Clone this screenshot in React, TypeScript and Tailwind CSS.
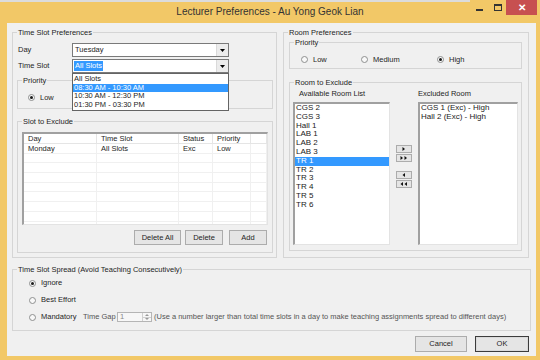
import React from "react";

const Radio = ({ label, checked = false }: { label: string; checked?: boolean }) => (
  <div className="flex h-[9px] items-center gap-[5px]">
    <span className="flex h-[7px] w-[7px] items-center justify-center rounded-full border border-[#8e8f8f] bg-[#f8f8f8]">
      {checked && <span className="h-[3px] w-[3px] rounded-full bg-[#1a1a1a]" />}
    </span>
    <span>{label}</span>
  </div>
);

const Group = ({
  title,
  className,
  children,
}: {
  title: string;
  className: string;
  children: React.ReactNode;
}) => (
  <fieldset className={"border border-[#d5d5d5] " + className}>
    <legend className="ml-[4px] px-[1px] leading-[9px]">{title}</legend>
    {children}
  </fieldset>
);

const Combo = ({ value, selected = false }: { value: string; selected?: boolean }) => (
  <div className="flex h-[14px] w-[157px] items-center border border-[#7a7a7a] bg-white">
    <div className="flex h-full flex-1 items-center pl-[1px]">
      {selected ? (
        <span className="flex h-[10px] items-center bg-[#3399ff] px-[1px] text-white">{value}</span>
      ) : (
        <span className="pl-[1px]">{value}</span>
      )}
    </div>
    <div className="flex h-full w-[12px] items-center justify-center border-l border-[#dadada] bg-[#ececec]">
      <svg width="5" height="3" viewBox="0 0 5 3">
        <path d="M0 0H5L2.5 3Z" fill="#000" />
      </svg>
    </div>
  </div>
);

const Button = ({ label, className }: { label: string; className: string }) => (
  <button className={"flex items-center justify-center border border-[#acacac] bg-[#e5e5e5] " + className}>
    {label}
  </button>
);

const Arrow = ({ dir, count }: { dir: "left" | "right"; count: number }) => (
  <button className="flex h-[8px] w-[16px] items-center justify-center border border-[#acacac] bg-[#e5e5e5]">
    <svg width={count * 4} height="4" viewBox={`0 0 ${count * 4} 4`}>
      {Array.from({ length: count }).map((_, i) =>
        dir === "right" ? (
          <path key={i} d={`M${i * 4 + 0.5} 0L${i * 4 + 3} 2L${i * 4 + 0.5} 4Z`} fill="#111" />
        ) : (
          <path key={i} d={`M${i * 4 + 3} 0L${i * 4 + 0.5} 2L${i * 4 + 3} 4Z`} fill="#111" />
        )
      )}
    </svg>
  </button>
);

const rooms = ["CGS 2", "CGS 3", "Hall 1", "LAB 1", "LAB 2", "LAB 3", "TR 1", "TR 2", "TR 3", "TR 4", "TR 5", "TR 6"];
const excluded = ["CGS 1 (Exc) - High", "Hall 2 (Exc) - High"];
const slots = ["All Slots", "08:30 AM - 10:30 AM", "10:30 AM - 12:30 PM", "01:30 PM - 03:30 PM"];
const cols = ["w-[73px]", "w-[82px]", "w-[34px]", "w-[38px]", "flex-1"];

export default function App() {
  return (
    <div className="flex h-[360px] w-[540px] flex-col overflow-hidden bg-[#f2c867] font-['Liberation_Sans',Arial,sans-serif] text-[7.5px] text-[#1e1e1e]">
      {/* title bar */}
      <div className="relative h-[23px] shrink-0">
        <div className="h-[2px] w-[470px] bg-[#dcdcdc]" />
        <div className="pt-[3px] text-center text-[10px] leading-[14px] text-[#333]">
          Lecturer Preferences - Au Yong Geok Lian
        </div>
        <div className="absolute right-[3px] top-0 flex h-[15px] items-start">
          <div className="flex h-[15px] w-[20px] items-end justify-center pb-[4px]">
            <div className="h-[2px] w-[7px] bg-[#333]" />
          </div>
          <div className="flex h-[15px] w-[17px] items-center justify-center">
            <div className="h-[7px] w-[8px] border border-t-2 border-[#333]" />
          </div>
          <div className="flex h-[15px] w-[31px] items-center justify-center bg-[#c75050] text-[10px] font-bold text-white">
            ✕
          </div>
        </div>
      </div>

      {/* client area */}
      <div className="mb-[4px] ml-[7px] mr-[4px] flex flex-1 flex-col bg-[#f0f0f0] px-[5px] pt-[5px]">
        <div className="flex h-[230px] gap-[6px]">
          {/* Time slot preferences */}
          <Group title="Time Slot Preferences" className="h-[230px] w-[265px]">
            <div className="flex flex-col pl-[5px] pt-[6px]">
              <div className="flex h-[14px] items-center">
                <span className="w-[54px]">Day</span>
                <Combo value="Tuesday" />
              </div>
              <div className="relative mt-[2px] flex h-[14px] items-center">
                <span className="w-[54px]">Time Slot</span>
                <Combo value="All Slots" selected />
                <div className="absolute left-[54px] top-[14px] z-10 w-[157px] border border-[#646464] bg-white py-[1px]">
                  {slots.map((s, i) => (
                    <div
                      key={s}
                      className={
                        i === 1
                          ? "h-[8.5px] bg-[#3399ff] pl-[1px] leading-[8.5px] text-white"
                          : "h-[8.5px] pl-[1px] leading-[8.5px]"
                      }
                    >
                      {s}
                    </div>
                  ))}
                </div>
              </div>
            </div>
            <Group title="Priority" className="ml-[4px] mt-[3px] h-[33px] w-[256px]">
              <div className="pl-[10px] pt-[8px]">
                <Radio label="Low" checked />
              </div>
            </Group>
            <Group title="Slot to Exclude" className="ml-[4px] mt-[8px] h-[136px] w-[256px]">
              <div className="ml-[4px] mt-[6px] flex h-[93px] w-[246px] flex-col overflow-hidden border-b border-l-2 border-r border-t-2 border-b-[#e3e3e3] border-l-[#a0a0a0] border-r-[#e3e3e3] border-t-[#a0a0a0] bg-white">
                <div className="flex h-[10px] shrink-0 border-b border-[#e5e5e5] leading-[9px]">
                  {["Day", "Time Slot", "Status", "Priority", ""].map((h, i) => (
                    <div key={i} className={"border-r border-[#e5e5e5] pl-[4px] " + cols[i]}>
                      {h}
                    </div>
                  ))}
                </div>
                {Array.from({ length: 9 }).map((_, r) => (
                  <div key={r} className="flex h-[9.7px] shrink-0 border-b border-[#f0f0f0] leading-[9px]">
                    {(r === 0 ? ["Monday", "All Slots", "Exc", "Low", ""] : ["", "", "", "", ""]).map((c, i) => (
                      <div key={i} className={"border-r border-[#f0f0f0] pl-[4px] " + cols[i]}>
                        {c}
                      </div>
                    ))}
                  </div>
                ))}
              </div>
              <div className="mt-[5px] flex justify-end pr-[5px]">
                <Button label="Delete All" className="h-[15px] w-[47px]" />
                <Button label="Delete" className="ml-[4px] h-[15px] w-[38px]" />
                <Button label="Add" className="ml-[6px] h-[15px] w-[38px]" />
              </div>
            </Group>
          </Group>

          {/* Room preferences */}
          <Group title="Room Preferences" className="h-[230px] w-[246px]">
            <Group title="Priority" className="ml-[5px] mt-[1px] h-[31px] w-[233px]">
              <div className="flex pl-[11px] pt-[8px]">
                <div className="w-[60px]">
                  <Radio label="Low" />
                </div>
                <div className="w-[76px]">
                  <Radio label="Medium" />
                </div>
                <Radio label="High" checked />
              </div>
            </Group>
            <Group title="Room to Exclude" className="ml-[5px] mt-[9px] h-[173px] w-[233px]">
              <div className="mt-[2px] flex h-[9px] leading-[9px]">
                <span className="w-[128px] pl-[9px]">Available Room List</span>
                <span>Excluded Room</span>
              </div>
              <div className="ml-[3px] mt-[4px] flex h-[143px] gap-[6px]">
                <div className="w-[97px] border-b border-l-2 border-r border-t-2 border-b-[#e3e3e3] border-l-[#a0a0a0] border-r-[#e3e3e3] border-t-[#a0a0a0] bg-white">
                  {rooms.map((r) => (
                    <div
                      key={r}
                      className={
                        r === "TR 1"
                          ? "h-[8.8px] bg-[#3399ff] pl-[1px] text-[8px] leading-[8.8px] text-white"
                          : "h-[8.8px] pl-[1px] text-[8px] leading-[8.8px] text-[#222]"
                      }
                    >
                      {r}
                    </div>
                  ))}
                </div>
                <div className="flex w-[16px] flex-col gap-[1px] pt-[43px]">
                  <Arrow dir="right" count={1} />
                  <Arrow dir="right" count={2} />
                  <div className="h-[7px]" />
                  <Arrow dir="left" count={1} />
                  <Arrow dir="left" count={2} />
                </div>
                <div className="w-[100px] border-b border-l-2 border-r border-t-2 border-b-[#e3e3e3] border-l-[#a0a0a0] border-r-[#e3e3e3] border-t-[#a0a0a0] bg-white">
                  {excluded.map((r) => (
                    <div key={r} className="h-[8.8px] pl-[1px] text-[8px] leading-[8.8px] text-[#222]">
                      {r}
                    </div>
                  ))}
                </div>
              </div>
            </Group>
          </Group>
        </div>

        {/* spread */}
        <Group title="Time Slot Spread (Avoid Teaching Consecutively)" className="mt-[7px] h-[66px] w-[519px]">
          <div className="flex flex-col gap-[7px] pl-[16px] pt-[4px]">
            <div className="flex h-[10px] items-center">
              <Radio label="Ignore" checked />
            </div>
            <div className="flex h-[10px] items-center">
              <Radio label="Best Effort" />
            </div>
            <div className="flex h-[10px] items-center">
              <div className="w-[54px]">
                <Radio label="Mandatory" />
              </div>
              <span className="w-[34px] text-[#555]">Time Gap</span>
              <div className="flex h-[10px] w-[35px] items-center border border-[#b5b5b5] bg-[#f7f7f7]">
                <span className="flex-1 pl-[2px] leading-[8px] text-[#888]">1</span>
                <div className="flex h-full w-[9px] flex-col border-l border-[#d0d0d0]">
                  <div className="flex flex-1 items-center justify-center border-b border-[#d0d0d0]">
                    <svg width="4" height="2" viewBox="0 0 4 2">
                      <path d="M0 2L2 0L4 2Z" fill="#999" />
                    </svg>
                  </div>
                  <div className="flex flex-1 items-center justify-center">
                    <svg width="4" height="2" viewBox="0 0 4 2">
                      <path d="M0 0L2 2L4 0Z" fill="#999" />
                    </svg>
                  </div>
                </div>
              </div>
              <span className="ml-[2px] text-[#555]">
                (Use a number larger than total time slots in a day to make teaching assignments spread to different days)
              </span>
            </div>
          </div>
        </Group>

        <div className="mr-[2px] mt-[5px] flex justify-end gap-[8px]">
          <Button label="Cancel" className="h-[16px] w-[52px]" />
          <button className="flex h-[16px] w-[54px] items-center justify-center border border-[#3c3c3c] bg-[#e5e5e5] shadow-[inset_0_0_0_1px_#dadada]">
            OK
          </button>
        </div>
      </div>
    </div>
  );
}
